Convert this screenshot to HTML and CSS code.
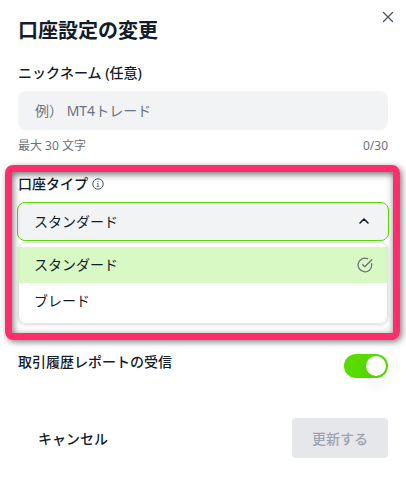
FILE: index.html
```html
<!DOCTYPE html>
<html lang="ja">

<head>
    <meta charset="UTF-8" />
    <meta name="viewport" content="width=device-width, initial-scale=1.0" />
    <title>口座設定の変更</title>
    <link rel="stylesheet" href="styles.css">
</head>

<body>
    <form class="dialog">
        <button type="button" class="close" aria-label="閉じる">
            <svg width="12" height="12" viewBox="0 0 12 12" fill="none" stroke="currentColor" stroke-width="1.3" stroke-linecap="round">
                <path d="M1.5 1.5l9 9M10.5 1.5l-9 9" />
            </svg>
        </button>
        <h1 class="title">口座設定の変更</h1>

        <div class="field">
            <label for="nickname">ニックネーム (任意)</label>
            <input type="text" id="nickname" class="text-input" maxlength="30" placeholder="例） MT4トレード">
            <div class="hint">
                <span>最大 30 文字</span>
                <span>0/30</span>
            </div>
        </div>

        <div class="field highlight">
            <div class="label-row">
                <label for="accountType">口座タイプ</label>
                <svg width="12" height="12" viewBox="0 0 12 12" fill="none" stroke="currentColor">
                    <circle cx="6" cy="6" r="5.2" />
                    <path d="M5 5.5h1v3M4.8 8.5h2.4" stroke-width="0.8" />
                    <circle cx="6" cy="3.6" r="0.6" fill="currentColor" stroke="none" />
                </svg>
            </div>
            <div class="select-box">
                <select id="accountType">
                    <option selected>スタンダード</option>
                    <option>ブレード</option>
                </select>
                <svg class="chevron" width="12" height="12" viewBox="0 0 12 12" fill="none" stroke="currentColor" stroke-width="1.6" stroke-linecap="round" stroke-linejoin="round">
                    <path d="M2 8l4-4 4 4" />
                </svg>
            </div>
            <ul class="options" role="listbox" aria-label="口座タイプ">
                <li class="selected" role="option" aria-selected="true">
                    スタンダード
                    <svg width="16" height="16" viewBox="0 0 16 16" fill="none" stroke="currentColor" stroke-width="1.3" stroke-linecap="round" stroke-linejoin="round">
                        <path d="M14.7 6.6V8A6.8 6.8 0 1 1 10.7 1.8" />
                        <path d="M5.4 7.4l2.4 2.4 7-7" />
                    </svg>
                </li>
                <li role="option" aria-selected="false">ブレード</li>
            </ul>
        </div>

        <div class="toggle-row">
            <label for="report">取引履歴レポートの受信</label>
            <input type="checkbox" id="report" class="switch" role="switch" checked>
        </div>

        <div class="actions">
            <button type="button" class="btn">キャンセル</button>
            <button type="submit" class="btn btn-primary" disabled>更新する</button>
        </div>
    </form>
</body>

</html>
```

FILE: styles.css
```css
* {
    margin: 0;
    padding: 0;
    box-sizing: border-box;
    font-family: 'Noto Sans', 'Noto Sans CJK JP', sans-serif;
}

:root {
    --text: #111c2d;
    --muted: #6b7280;
    --field: #f2f3f5;
    --green: #58db00;
    --pink: #ff2d6b;
}

body {
    background: #fff;
    color: var(--text);
    font-size: 14px;
    line-height: 20px;
}

.dialog {
    position: relative;
    padding: 17px 18px;
}

.close {
    position: absolute;
    top: 11px;
    right: 12px;
    display: flex;
    background: none;
    border: none;
    color: #4b5563;
    cursor: pointer;
}

.title {
    font-size: 20px;
    font-weight: 700;
    line-height: 28px;
    margin-bottom: 18px;
}

label {
    font-weight: 500;
}

.field {
    display: flex;
    flex-direction: column;
    gap: 8px;
    margin-bottom: 20px;
}

.text-input {
    width: 100%;
    height: 39px;
    padding: 0 17px;
    background: var(--field);
    border: none;
    border-radius: 8px;
    color: var(--text);
    font-size: 14px;
}

.text-input::placeholder {
    color: var(--muted);
}

.hint {
    display: flex;
    justify-content: space-between;
    color: var(--muted);
    font-size: 12px;
    line-height: 16px;
}

.highlight {
    position: relative;
    margin-bottom: 30px;
}

/* marker frame around the account type */
.highlight::after {
    content: '';
    position: absolute;
    inset: -9px -12px -16px -13px;
    border: 7px solid var(--pink);
    border-radius: 8px;
    box-shadow: 2px 2px 6px rgba(0, 0, 0, 0.5), inset 1px 2px 7px rgba(0, 0, 0, 0.6);
    pointer-events: none;
}

.label-row {
    display: flex;
    align-items: center;
    gap: 4px;
}

.label-row svg {
    color: #4b5563;
}

.select-box {
    position: relative;
    margin: 0 -1px;
}

select {
    display: block;
    width: 100%;
    height: 39px;
    padding: 0 16px;
    appearance: none;
    background: var(--field);
    border: 1px solid var(--green);
    border-radius: 8px;
    color: var(--text);
    font-size: 14px;
}

.chevron {
    position: absolute;
    top: 13px;
    right: 19px;
    pointer-events: none;
}

.options {
    margin-top: -7px;
    padding: 5px 0;
    list-style: none;
    border-radius: 8px;
    box-shadow: inset 0 0 0 1px #e5e7eb, 0 1px 3px rgba(0, 0, 0, 0.15);
}

.options li {
    display: flex;
    align-items: center;
    justify-content: space-between;
    height: 36px;
    padding: 0 15px 0 16px;
}

.options .selected {
    background: #d9f9c4;
}

.options svg {
    color: var(--muted);
}

.toggle-row {
    display: flex;
    align-items: flex-start;
    justify-content: space-between;
    margin-bottom: 40px;
    line-height: 16px;
}

.switch {
    width: 44px;
    height: 24px;
    padding: 2px;
    appearance: none;
    background: var(--green);
    border-radius: 12px;
    cursor: pointer;
}

.switch::before {
    content: '';
    display: block;
    width: 20px;
    height: 20px;
    background: #fff;
    border-radius: 50%;
    box-shadow: 0 8px 16px rgba(0, 0, 0, 0.08);
}

.switch:checked::before {
    margin-left: auto;
}

.actions {
    display: flex;
    justify-content: space-between;
}

.btn {
    height: 40px;
    padding: 0 20px;
    background: none;
    border: none;
    border-radius: 4px;
    color: var(--text);
    font-size: 14px;
    font-weight: 500;
}

.btn-primary {
    background: #e5e7eb;
    color: #9ca3af;
}
```
